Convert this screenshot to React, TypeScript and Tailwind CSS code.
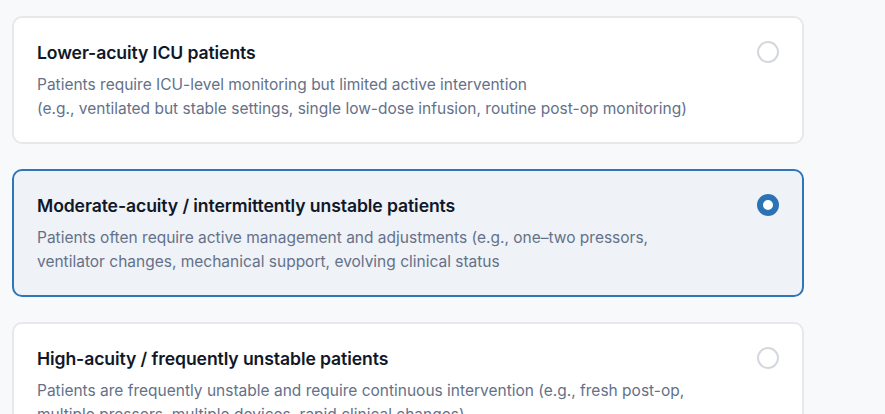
import React, { useState } from 'react';

type Option = {
    id: string;
    title: string;
    lines: string[];
};

const OPTIONS: Option[] = [
    {
        id: 'low',
        title: 'Lower-acuity ICU patients',
        lines: [
            'Patients require ICU-level monitoring but limited active intervention',
            '(e.g., ventilated but stable settings, single low-dose infusion, routine post-op monitoring)',
        ],
    },
    {
        id: 'moderate',
        title: 'Moderate-acuity / intermittently unstable patients',
        lines: [
            'Patients often require active management and adjustments (e.g., one–two pressors, ventilator changes, mechanical support, evolving clinical status',
        ],
    },
    {
        id: 'high',
        title: 'High-acuity / frequently unstable patients',
        lines: [
            'Patients are frequently unstable and require continuous intervention (e.g., fresh post-op, multiple pressors, multiple devices, rapid clinical changes)',
        ],
    },
];

function Radio({ checked }: { checked: boolean }) {
    return (
        <span
            className={
                checked
                    ? 'mr-[1px] block w-[22px] h-[22px] flex-shrink-0 rounded-full border-[6px] border-[#2c73b6] bg-white'
                    : 'mr-[1px] block w-[22px] h-[22px] flex-shrink-0 rounded-full border-2 border-[#d4d8de] bg-white'
            }
        />
    );
}

export default function App() {
    const [selected, setSelected] = useState('moderate');

    return (
        <div className="min-h-screen w-full bg-[#f8f9fb] font-['Inter',sans-serif] overflow-hidden">
            <div className="w-[792px] ml-3 pt-4 flex flex-col gap-[25px]">
                {OPTIONS.map((opt) => {
                    const active = opt.id === selected;
                    return (
                        <button
                            key={opt.id}
                            type="button"
                            onClick={() => setSelected(opt.id)}
                            className={
                                active
                                    ? 'w-full text-left flex items-start gap-4 rounded-[10px] border-2 border-[#2f76b8] bg-[#eff2f7] px-[22px] pt-[23px] pb-[21px]'
                                    : 'w-full text-left flex items-start gap-4 rounded-[10px] border-2 border-[#e6e8eb] bg-white px-[22px] pt-[23px] pb-[21px]'
                            }
                        >
                            <div className="flex-1 max-w-[672px] pl-[1px]">
                                <h3 className="text-[17.6px] leading-6 font-semibold text-[#101828] tracking-[-0.1px]">
                                    {opt.title}
                                </h3>
                                <p className="mt-2 text-[15.5px] leading-6 text-[#647189]">
                                    {opt.lines.map((line, i) => (
                                        <React.Fragment key={i}>
                                            {i > 0 && <br />}
                                            {line}
                                        </React.Fragment>
                                    ))}
                                </p>
                            </div>
                            <div className="ml-auto">
                                <Radio checked={active} />
                            </div>
                        </button>
                    );
                })}
            </div>
        </div>
    );
}
